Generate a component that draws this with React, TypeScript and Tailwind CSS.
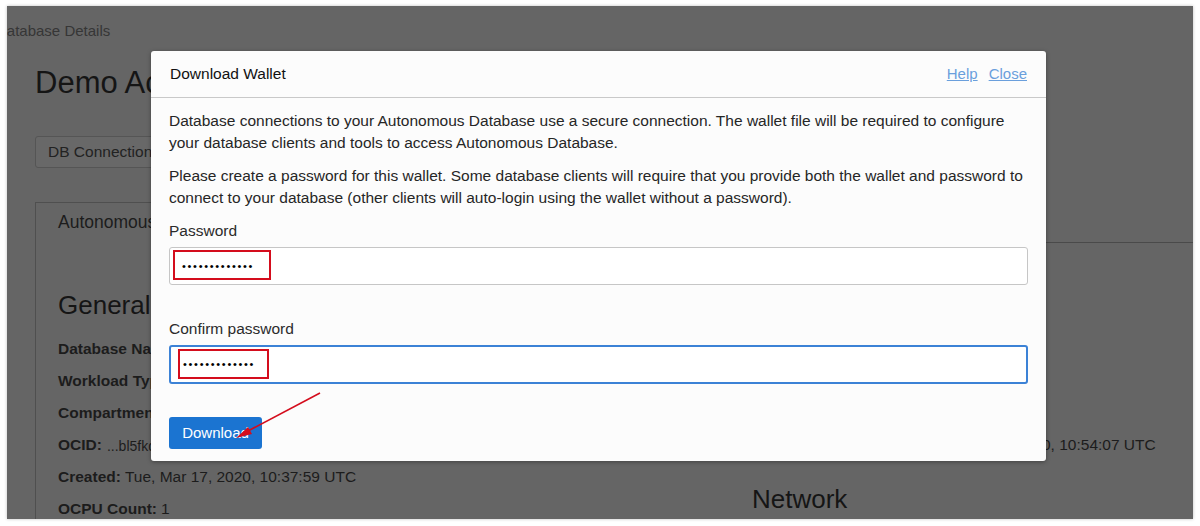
const leftRows = [
  { label: 'Database Name:', value: 'DEMOADW' },
  { label: 'Workload Type:', value: 'Data Warehouse' },
  { label: 'Compartment:', value: 'demo' },
  { label: 'OCID:', value: '...bl5fkq', small: true },
  { label: 'Created:', value: 'Tue, Mar 17, 2020, 10:37:59 UTC' },
  { label: 'OCPU Count:', value: '1' },
]

const rightRows = [
  { label: 'Lifecycle State:', value: 'Available' },
  { label: 'Storage:', value: '1 TB' },
  { label: 'Auto Scaling:', value: 'Disabled' },
  { label: 'License Type Updated:', value: 'Tue, Mar 17, 2020, 10:54:07 UTC' },
]

function Dots() {
  return (
    <span className="text-[11px] tracking-[1.7px] text-black leading-none">
      •••••••••••••
    </span>
  )
}

function WalletDialog() {
  return (
    <div className="absolute left-[144px] top-[45px] w-[895px] h-[410px] bg-[#fcfcfc] rounded-[3px] shadow-[0_1px_4px_rgba(0,0,0,0.35)]">
      {/* Header */}
      <div className="flex items-center justify-between h-[47px] px-[19px] border-b border-[#c9c9c9]">
        <h2 className="text-[15.5px] font-medium text-[#111]">Download Wallet</h2>
        <div className="flex gap-[11px] text-[15px] text-[#6a9fdc]">
          <a className="underline">Help</a>
          <a className="underline">Close</a>
        </div>
      </div>

      {/* Body */}
      <div className="relative px-[18px] pt-[12px] text-[15.5px] leading-[22px] text-[#262626]">
        <p>
          Database connections to your Autonomous Database use a secure connection. The wallet file will be required to configure
          your database clients and tools to access Autonomous Database.
        </p>
        <p className="mt-[11px]">
          Please create a password for this wallet. Some database clients will require that you provide both the wallet and password to
          connect to your database (other clients will auto-login using the wallet without a password).
        </p>

        <label className="block mt-[11px] text-[#2b2b2b]">Password</label>
        <div className="relative mt-[5px] h-[38px] bg-white border border-[#c6c6c6] rounded-[3px] flex items-center pl-[12px]">
          <Dots />
          <div className="absolute left-[3px] top-[2px] w-[98px] h-[30px] border-2 border-[#d40d1d]" />
        </div>

        <label className="block mt-[33px] text-[#2b2b2b]">Confirm password</label>
        <div className="relative mt-[5px] h-[39px] bg-white border-2 border-[#3c82d6] rounded-[3px] flex items-center pl-[12px]">
          <Dots />
          <div className="absolute left-[7px] top-[2px] w-[91px] h-[30px] border-2 border-[#d40d1d]" />
        </div>

        <button className="mt-[33px] h-[32px] w-[93px] rounded-[3px] bg-[#1b74d1] text-white text-[15px]">
          Download
        </button>

        {/* annotation arrow */}
        <svg className="absolute left-[75px] top-[293px]" width="100" height="50" viewBox="0 0 100 50">
          <line x1="94" y1="2" x2="20" y2="41" stroke="#d40d1d" strokeWidth="1.6" />
          <polygon points="10,47 22,36 26,43" fill="#d40d1d" />
        </svg>
      </div>
    </div>
  )
}

export default function App() {
  return (
    <div className="w-[1200px] h-[526px] bg-white pt-[6px] pl-[7px] pr-[7px] pb-[7px] font-['Liberation_Sans',Arial,sans-serif]">
      <div className="relative w-full h-full overflow-hidden bg-[#656565] shadow-[0_0_3px_rgba(0,0,0,0.25)]">
        {/* Page behind the dialog */}
        <div className="pt-[14px]">
          <div className="ml-[-11px] text-[15px] text-[#363636]">Database Details</div>
          <h1 className="ml-[28px] mt-[22px] text-[31px] leading-[36px] text-[#151515]">Demo Account</h1>
          <div className="ml-[28px] mt-[35px] flex">
            <div className="h-[32px] px-[12px] flex items-center border border-[#555] rounded-[3px] bg-[#686868] text-[15.5px] text-[#222]">
              DB Connection
            </div>
          </div>

          <div className="ml-[28px] mt-[34px] border-l border-[#4f4f4f]">
            <div className="flex">
              <div className="w-[400px] h-[41px] flex items-center pl-[22px] border-t border-r border-[#4f4f4f] text-[17.5px] text-[#1c1c1c]">
                Autonomous Database Information
              </div>
              <div className="flex-1 border-b border-[#4a4a4a]" />
            </div>

            <div className="pl-[22px] pt-[47px] grid grid-cols-[694px_1fr]">
              <div>
                <h3 className="text-[26px] leading-[30px] text-[#151515]">General Information</h3>
                <div className="mt-[13px]">
                  {leftRows.map((r) => (
                    <div key={r.label} className="h-[32px] flex items-center text-[15.5px] text-[#1c1c1c]">
                      <span className="font-bold">{r.label}</span>
                      <span className={r.small ? 'ml-[5px] text-[14px] mt-[3px]' : 'ml-[4px]'}>{r.value}</span>
                    </div>
                  ))}
                </div>
              </div>
              <div className="pt-[43px]">
                {rightRows.map((r) => (
                  <div key={r.label} className="h-[32px] flex items-center text-[15.5px] text-[#1c1c1c]">
                    <span className="font-bold">{r.label}</span>
                    <span className="ml-[4px]">{r.value}</span>
                  </div>
                ))}
                <h3 className="mt-[23px] text-[26px] leading-[30px] text-[#151515]">Network</h3>
              </div>
            </div>
          </div>
        </div>

        <WalletDialog />
      </div>
    </div>
  )
}
